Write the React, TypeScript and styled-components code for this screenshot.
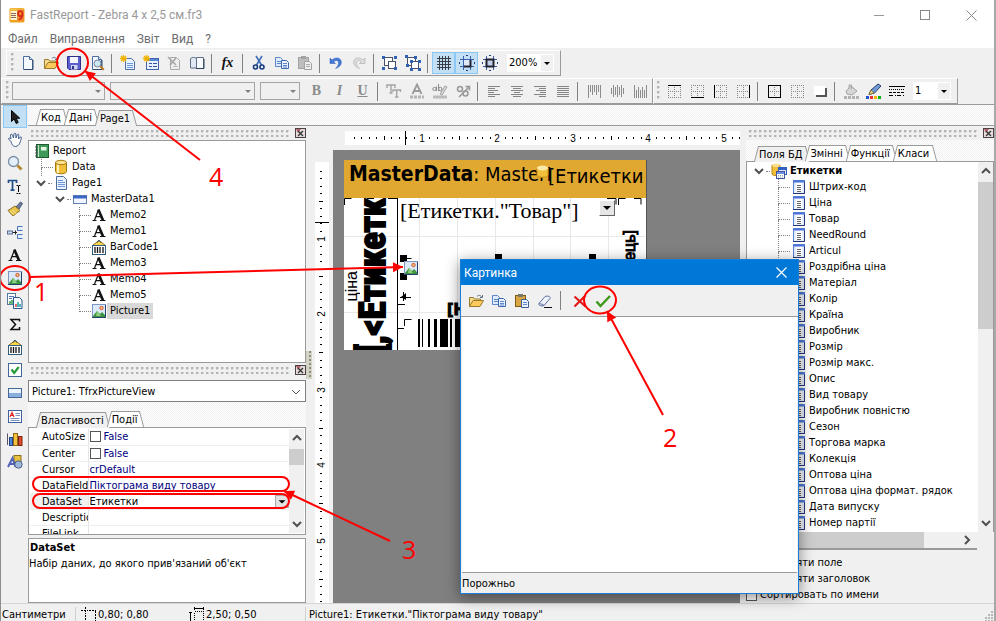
import React from "react";
import styled, { createGlobalStyle, css } from "styled-components";

const UI = `"DejaVu Sans Condensed", "DejaVu Sans", sans-serif`;
const CAPTION = `Roboto, "Open Sans", sans-serif`;
const FACE = "#f0f0f0";
const EDGE = "#9a9a9a";

const Global = createGlobalStyle`
  * { box-sizing: border-box; }
  html, body { margin: 0; padding: 0; }
  body { font-family: ${UI}; font-size: 11px; line-height: 16px; color: #000; background: ${FACE}; }
  button, select, input { font: inherit; color: inherit; margin: 0; padding: 0; }
  svg { display: block; }
`;

const hatch = css`
  background: repeating-conic-gradient(#ffffff 0 25%, #f0f0f0 0 50%) 0 0 / 2px 2px;
`;

/* ---------- icons ---------- */

const Glyph = styled.svg.attrs({ viewBox: "0 0 16 16" })`
  width: 16px;
  height: 16px;
  flex: none;
`;

const dottedBox = (
  <path d="M2 2.5H15M2 8.5H15M2 14.5H15M2.5 2V15M8.5 2V15M14.5 2V15" stroke="#888" strokeDasharray="1 1" fill="none" />
);
const groupShape = (
  <>
    <rect x="2.5" y="2.5" width="8" height="8" fill="#fff" stroke="#4a5068" />
    <rect x="6.5" y="6.5" width="7" height="7" fill="#fff" stroke="#4a5068" />
  </>
);
const guides = (
  <>
    <path d="M1 4.5H15M1 11.5H15M4.5 1V15M11.5 1V15" stroke="#3560b0" />
    <path d="M7 0h2v1H7zM7 15h2v1H7zM0 7h1v2H0zM15 7h1v2h-1z" fill="#1c3c80" />
  </>
);
const pageShape = (
  <>
    <path d="M3.5 1.5h6l3 3v10h-9z" fill="#f4f8ff" stroke="#4d6da0" />
    <path d="M9.5 1.5v3h3" fill="#cfdcf2" stroke="#4d6da0" />
    <path d="M4 14.5h9V5" fill="none" stroke="#34496e" />
  </>
);
const barcodeShape = (
  <>
    <path d="M1.5 6.5L8 1.5l6.5 5z" fill="#ffd84a" stroke="#8a6a10" />
    <path d="M6.5 3.5a1.5 2 0 0 1 3 0" fill="none" stroke="#33506e" />
    <rect x="1.5" y="6.5" width="13" height="9" fill="#fff" stroke="#2f5d80" />
    <path d="M4 8v6M6.5 8v6M9 8v6M12 8v6" stroke="#111" strokeWidth="1.3" />
  </>
);
const pictureShape = (
  <>
    <rect x="1.5" y="1.5" width="13" height="13" fill="#dce9fb" stroke="#7c97c4" />
    <path d="M1 14.5h13.5V2" fill="none" stroke="#25406c" />
    <path d="M2 13l4-5 3 3 2-2 3 3v2H2z" fill="#3c9440" />
    <path d="M6 7.5l4 5.5H5z" fill="#8fce7e" />
    <circle cx="10.5" cy="5" r="1.7" fill="#fbc08a" stroke="#d05a28" />
  </>
);
const lines = (rows: number[][]) => (
  <path d={rows.map(([x, w], i) => `M${x} ${3.5 + i * 2}h${w}`).join("")} stroke="#858585" />
);
const barsUp = (tops: number[][]) => (
  <path d={tops.map(([a, b], i) => `M${2.5 + i * 2} ${a}V${b}`).join("")} stroke="#8c8c8c" />
);

const art: Record<string, React.ReactNode> = {
  app: (
    <>
      <rect x="0.5" y="1" width="15" height="14.5" rx="1.5" fill="#f0a21c" />
      <path d="M1 2.5h14" stroke="#f6c957" strokeWidth="2" />
      <rect x="1.5" y="4" width="6.5" height="9" fill="#fff3cf" />
      <path d="M2 6.5h5M2 8.5h5M2 10.5h5" stroke="#8a6a5a" />
      <rect x="8" y="2.5" width="7" height="11.5" fill="#f08a2c" />
      <path d="M13.5 7.5a2.3 2.5 0 1 1-.2-2.2c.6 3-.3 6-3.3 7.2" fill="none" stroke="#d8281c" strokeWidth="1.7" />
    </>
  ),
  new: pageShape,
  open: (
    <>
      <path d="M1.5 13.5V4.5h4l1 1.5h6v3" fill="#f5dc8a" stroke="#9b7a2b" />
      <path d="M1.5 13.5L5 7.5h10.5l-3.5 6z" fill="#fbc95c" stroke="#9b7a2b" />
      <path d="M9 3.5c2-2 4-1 4.5.5M14.5 2v2.5H12" fill="none" stroke="#5a7284" />
    </>
  ),
  save: (
    <>
      <path d="M1.5 1.5h13v13H3l-1.5-1.5z" fill="#5b5fd0" stroke="#30308c" />
      <rect x="4" y="2" width="8" height="6" fill="#f4f6ff" />
      <rect x="5" y="10" width="6.5" height="4.5" fill="#cfd4ee" />
      <rect x="6" y="11" width="2" height="3" fill="#30308c" />
    </>
  ),
  preview: (
    <>
      {pageShape}
      <circle cx="8.5" cy="8.5" r="3.5" fill="#cfe6f5" stroke="#6f8494" />
      <path d="M11.2 11.2l3.6 3.6" stroke="#c07a20" strokeWidth="2" />
    </>
  ),
  newReport: (
    <>
      <path d="M5.5 3.5h6l3 3v8h-9z" fill="#e8f1ff" stroke="#4d6da0" />
      <path d="M7 8.5h6M7 10.5h6M7 12.5h6" stroke="#6c96dd" />
      <path d="M3.5 0v7M0 3.5h7M1 1l5 5M6 1L1 6" stroke="#f0b400" strokeWidth="1.3" />
    </>
  ),
  newDialog: (
    <>
      <rect x="3.5" y="3.5" width="12" height="11" fill="#e8f1ff" stroke="#3f62a8" />
      <path d="M4 5h11" stroke="#5c88da" strokeWidth="2" />
      <path d="M6 8.5h3M10 8.5h4M6 11.5h3M10 11.5h4" stroke="#33549c" />
      <path d="M3.5 0v7M0 3.5h7M1 1l5 5M6 1L1 6" stroke="#f0b400" strokeWidth="1.3" />
    </>
  ),
  del: (
    <>
      <path d="M4.5 2.5h6l3 3v9h-9z" fill="#eee" stroke="#aaa" />
      <path d="M2 2l8 8M10 3L4 10" stroke="#a5a5a5" strokeWidth="1.5" />
      <path d="M7 11.5h5" stroke="#bbb" />
    </>
  ),
  pageSet: (
    <>
      <path d="M1.5 3.5c2-1.5 4-1.5 6 0v9.5h-6z" fill="#dfe8f4" stroke="#5f6f86" />
      <path d="M7.5 2.5h7v11h-7z" fill="#f7fbff" stroke="#5f6f86" />
      <path d="M7 13.5h8V4" fill="none" stroke="#2d3f58" />
    </>
  ),
  cut: (
    <>
      <path d="M5 1l5.5 9M11 1L5.5 10" stroke="#3f6fb8" strokeWidth="1.6" fill="none" />
      <circle cx="4.5" cy="12" r="2" fill="none" stroke="#173a80" strokeWidth="1.6" />
      <circle cx="11" cy="12" r="2" fill="none" stroke="#173a80" strokeWidth="1.6" />
    </>
  ),
  copy: (
    <>
      <path d="M1.5 2.5h5l2 2v7h-7z" fill="#dfebff" stroke="#5c86c8" />
      <path d="M3 6.5h4M3 8.5h4" stroke="#5c86c8" />
      <path d="M7.5 5.5h5l2 2v6h-7z" fill="#e8f1ff" stroke="#3f68b0" />
      <path d="M9 8.5h4M9 10.5h4M9 12h4" stroke="#5c86c8" />
    </>
  ),
  pasteOff: (
    <>
      <rect x="1.5" y="2.5" width="10" height="11" fill="#bdbdbd" stroke="#a2a2a2" />
      <rect x="4" y="1" width="5" height="3" fill="#a2a2a2" />
      <path d="M7.5 6.5h5l2 2v6h-7z" fill="#eee" stroke="#a2a2a2" />
      <path d="M9 9.5h4M9 11.5h4" stroke="#aaa" />
    </>
  ),
  paste: (
    <>
      <rect x="1.5" y="2.5" width="10" height="11" fill="#d9a441" stroke="#7d5a1c" />
      <rect x="4" y="1" width="5" height="3" fill="#776" />
      <path d="M7.5 6.5h5l2 2v6h-7z" fill="#e8f1ff" stroke="#3f5f90" />
      <path d="M9 9.5h4M9 11.5h4" stroke="#5c86c8" />
    </>
  ),
  undo: <path d="M2 3v5.5h5.5L5.7 6.8C8 4.5 11 5.5 10.5 8.5 10.3 10.5 9 12 7.5 13.5c3.5-1 6-3.5 5.8-6.5C13 2.5 7.5 1.5 3.9 5z" fill="#4377d4" stroke="#2f5fb6" strokeWidth=".5" />,
  redo: <path d="M14 3v5.5H8.5l1.8-1.7C8 4.5 5 5.5 5.5 8.5c.2 2 1.5 3.5 3 5-3.5-1-6-3.5-5.8-6.5C3 2.5 8.5 1.5 12.1 5z" fill="#ddd" stroke="#b9b9b9" strokeWidth=".8" />,
  group: (
    <>
      {groupShape}
      <path d="M0 1h3v3H0zM12 1h3v3h-3zM0 12h3v3H0zM12 12h3v3h-3z" fill="#2f62b4" />
    </>
  ),
  ungroup: (
    <>
      {groupShape}
      <path d="M0 0h3v3H0zM9 1h3v3H9zM1 9h3v3H1zM5 5h3v3H5zM13 5h3v3h-3zM5 13h3v3H5zM13 13h3v3h-3z" fill="#2f62b4" />
    </>
  ),
  grid: <path d="M1 3.5H15M1 6.5H15M1 9.5H15M1 12.5H15M3.5 1V15M6.5 1V15M9.5 1V15M12.5 1V15" stroke="#3a3f46" />,
  snap: (
    <>
      {guides}
      <rect x="5" y="5" width="6" height="6" fill="#dfe8f6" />
      <path d="M5 11.5h6.5V5" stroke="#223" strokeWidth="2" fill="none" />
    </>
  ),
  fit: (
    <>
      {guides}
      <rect x="4.5" y="4.5" width="7" height="7" fill="#c4d2ec" stroke="#223" strokeWidth="2" />
    </>
  ),
  textStyle: (
    <path d="M1 5V2h8v3M5 2v8M3.5 10h3M7 9V7h7.5v2M10.7 7v7M9 14h3.5" stroke="#a4a4a4" strokeWidth="1.4" fill="none" />
  ),
  fontColor: (
    <>
      <path d="M3.5 11L8 1.5 12.5 11M5.5 8h5" stroke="#9b9b9b" strokeWidth="1.8" fill="none" />
      <path d="M1 14h14" stroke="#b4b4b4" strokeWidth="3" strokeDasharray="3 1" />
    </>
  ),
  highlight: (
    <>
      <circle cx="2.5" cy="6" r="1.7" stroke="#8b8b8b" fill="none" />
      <path d="M4.5 3.5v4.500M6.5 1v7" stroke="#8b8b8b" />
      <circle cx="8.3" cy="6" r="1.7" stroke="#8b8b8b" fill="none" />
      <path d="M8 11l5-8 2 1-5 8z" fill="#ddd" stroke="#a0a0a0" />
      <path d="M1 14h14" stroke="#bbb" strokeWidth="3" />
    </>
  ),
  rotate: (
    <>
      <path d="M4 14L13.5 4.5M10.5 3.5h4v4" stroke="#989898" strokeWidth="1.5" fill="none" />
      <circle cx="5" cy="6" r="2.5" stroke="#989898" strokeWidth="1.5" fill="none" />
      <circle cx="10.5" cy="10.5" r="2.5" stroke="#989898" strokeWidth="1.5" fill="none" />
    </>
  ),
  alignL: lines([[2, 12], [2, 7], [2, 10], [2, 6], [2, 12], [2, 7]]),
  alignC: lines([[2, 12], [4, 8], [2, 12], [5, 6], [2, 12], [4, 8]]),
  alignR: lines([[2, 12], [7, 7], [4, 10], [8, 6], [2, 12], [7, 7]]),
  alignJ: lines([[2, 12], [2, 12], [2, 12], [2, 12], [2, 12], [2, 12]]),
  vTop: barsUp([[2, 15], [2, 9], [2, 12], [2, 9], [2, 12], [2, 9], [2, 15]]),
  vMid: barsUp([[5, 11], [2, 14], [4, 12], [2, 14], [4, 12], [2, 14], [5, 11]]),
  vBot: barsUp([[2, 15], [7, 15], [4, 15], [7, 15], [4, 15], [7, 15], [2, 15]]),
  bTop: <>{dottedBox}<path d="M2 2.5h13" stroke="#000" /></>,
  bBottom: <>{dottedBox}<path d="M2 14.5h13" stroke="#000" /></>,
  bLeft: <>{dottedBox}<path d="M2.5 2v13" stroke="#000" /></>,
  bRight: <>{dottedBox}<path d="M14.5 2v13" stroke="#000" /></>,
  bAll: <>{dottedBox}<rect x="2.5" y="2.5" width="12" height="12" fill="none" stroke="#000" /></>,
  bNone: dottedBox,
  shadow: (
    <>
      <path d="M4 5h11v9H4z" fill="#555" />
      <path d="M2 3h11v9H2z" fill="#fff" />
    </>
  ),
  fill: (
    <>
      <path d="M3 8l5-5 6 5-5 4-5-1z" fill="#d6d6d6" stroke="#a5a5a5" />
      <path d="M6 6V2h2.5v4" fill="none" stroke="#a5a5a5" />
      <path d="M1 14.5h15" stroke="#b2b2b2" strokeWidth="3" strokeDasharray="3 1" />
    </>
  ),
  pen: (
    <>
      <path d="M3 11.5L5 7l7-6 3 2-6.5 7z" fill="#6c9ad8" stroke="#2c3f66" />
      <path d="M3 11.5L5 7l3 3z" fill="#f3d470" stroke="#6b5c26" strokeWidth=".6" />
      <path d="M0 14.5h3" stroke="#2050d0" strokeWidth="3" />
      <path d="M4 14.5h3" stroke="#f03030" strokeWidth="3" />
      <path d="M8 14.5h3" stroke="#f5b400" strokeWidth="3" />
      <path d="M12 14.5h3" stroke="#10b010" strokeWidth="3" />
    </>
  ),
  lineStyle: (
    <>
      <path d="M0 3.5h16" stroke="#000" />
      <path d="M0 6.5h16" stroke="#000" strokeDasharray="1 1" />
      <path d="M0 9.5h16" stroke="#000" strokeDasharray="3 1" />
      <path d="M0 12.5h16" stroke="#000" strokeDasharray="4 2 1 1" />
    </>
  ),
  pointer: <path d="M4.5 1.5v11l2.7-2.5 2 4.5 2-1-2-4.3h3.5z" fill="#222" stroke="#000" />,
  hand: (
    <path d="M4 9.5L1.5 7c0-1.3 1.4-1.2 2.5 0L3.5 3c.3-1.2 1.5-1 2 0L6.5 6 7 1.8c.5-1 1.6-.8 1.8.2L9 6l1.3-3.5c.7-.8 1.6-.3 1.5.6L11.5 7l1.7-2c.9-.5 1.5.3 1.2 1-1 3-1.4 8-6 8.5-2.7 0-3.8-2.5-4.4-5z" fill="#fff" stroke="#3f5d8a" />
  ),
  zoom: (
    <>
      <circle cx="6.5" cy="6.5" r="5" fill="#e3effb" stroke="#7e8fa5" strokeWidth="1.3" />
      <path d="M10.5 10.5l4 4" stroke="#b58a35" strokeWidth="3" />
    </>
  ),
  text: (
    <>
      <path d="M1.5 5V2.5h8V5M5.5 2.5V12M3.5 12.2h4" stroke="#1f4f8a" strokeWidth="1.7" fill="none" />
      <path d="M9.5 7.5h1.500l.5.5.5-.5h1.5M11.500 8v6M9.5 15.5h1.5l.5-.5.5.5h1.5" stroke="#000" fill="none" />
    </>
  ),
  brush: (
    <>
      <path d="M9 6l4.5-5 2 1.5L12 8z" fill="#6b7f9e" stroke="#44536b" />
      <path d="M1 9.5L8 5l5 4.5-7 5.5z" fill="#e8c34b" stroke="#8c6f22" />
      <path d="M3 10l4 4M5.5 9l4 4" stroke="#fbe79b" />
    </>
  ),
  connect: (
    <>
      <rect x="0.5" y="7" width="5" height="3" fill="#c9d9f4" stroke="#5a6c8c" />
      <path d="M6 8.5h4M8.5 6.5v4" stroke="#222" />
      <path d="M15.5 2.5h-5v4h5M15.5 10.5h-5v4h5" fill="#e4eefc" stroke="#4d71b5" />
    </>
  ),
  letter: (
    <>
      <path d="M3.5 13L7.5 3" stroke="#111" strokeWidth="1.2" />
      <path d="M7.3 2.5L12 13.3" stroke="#111" strokeWidth="2.6" />
      <path d="M5 9.7h5.5M1.5 13.5h4M9 13.5h5.5" stroke="#111" strokeWidth="1.2" />
    </>
  ),
  picture: pictureShape,
  subreport: (
    <>
      <rect x="0.5" y="0.5" width="8" height="11" fill="#fff" stroke="#55779c" />
      <path d="M6.5 4.5h6l2.5 2.5v8.5H6.5z" fill="#f4f9ff" stroke="#2d5790" />
      <path d="M2 3.5h5M2 5.5h3" stroke="#4f79b8" />
      <path d="M3 11V8M5 11V7" stroke="#2c9b46" strokeWidth="1.5" />
      <path d="M9 14v-3" stroke="#d43b3b" strokeWidth="1.5" />
      <path d="M11 14V9M13 14v-3" stroke="#23a0a0" strokeWidth="1.5" />
    </>
  ),
  sum: <path d="M12.5 5.5V3.5H4L8.5 8.5 4 13.5h8.5v-2.5" fill="none" stroke="#111" strokeWidth="1.5" />,
  barcode: barcodeShape,
  check: (
    <>
      <rect x="1.5" y="1.5" width="13" height="13" fill="#fff" stroke="#44679a" />
      <path d="M4.5 7.5l2.7 3.5 4.5-6" fill="none" stroke="#239b37" strokeWidth="2.2" />
    </>
  ),
  band: (
    <>
      <rect x="1.5" y="3.5" width="13" height="9" fill="#eef4fd" stroke="#44679a" />
      <path d="M2 8h12v4H2z" fill="#8caedf" />
    </>
  ),
  richText: (
    <>
      <rect x="1.5" y="2.5" width="13" height="12" fill="#fff" stroke="#3f5fa0" />
      <path d="M3 9l2-4.5L7 9M4 7.5h2" stroke="#e02020" fill="none" strokeWidth="1.2" />
      <path d="M8.5 5.5h4.5M8.5 7.5h4.5M3.5 10.5h9M3.5 12.5h9" stroke="#7f93c0" />
    </>
  ),
  chart: (
    <>
      <path d="M0.5 14V2.5" stroke="#556" />
      <rect x="2.5" y="6.5" width="3" height="8" fill="#4d83d8" stroke="#264a88" />
      <rect x="6.5" y="2.5" width="4" height="12" fill="#f3c13c" stroke="#8d6914" />
      <rect x="11.5" y="5.5" width="3.5" height="9" fill="#d84c2c" stroke="#7f2412" />
    </>
  ),
  shapes: (
    <>
      <rect x="7" y="1.5" width="7" height="7" fill="#e9c23f" stroke="#8c6f22" />
      <path d="M1 13l4.5-9 3 9M3 10h5" stroke="#5361b8" strokeWidth="2" fill="none" />
      <circle cx="11.5" cy="10.5" r="3.7" fill="#9eb6d8" stroke="#4c648c" />
    </>
  ),
  report: (
    <>
      <rect x="2.5" y="1.5" width="12" height="13" fill="#3f9a5a" stroke="#1e5a32" />
      <path d="M4.5 2v12" stroke="#c9e6cf" />
      <rect x="7" y="4" width="5.5" height="3.5" fill="#e6f5e8" />
      <path d="M1 4h3M1 7h3M1 10h3M1 13h3" stroke="#555" />
    </>
  ),
  data: (
    <>
      <path d="M2.5 3.5v9c0 3 11 3 11 0v-9z" fill="#f2bf3a" stroke="#a67a12" />
      <path d="M5 5v9" stroke="#fff0b8" strokeWidth="2" />
      <ellipse cx="8" cy="3.5" rx="5.5" ry="2.2" fill="#fbe08d" stroke="#a67a12" />
    </>
  ),
  page: (
    <>
      <path d="M3.5 1.5h7l3 3v10h-10z" fill="#eaf2ff" stroke="#4d6da0" />
      <path d="M5 5.5h5M5 7.5h7M5 9.5h7M5 11.5h7" stroke="#6f97da" />
    </>
  ),
  masterBand: (
    <>
      <rect x="1.5" y="4.5" width="13" height="8" fill="#f2f7ff" stroke="#6281b8" />
      <path d="M1 6h14" stroke="#3c68c4" strokeWidth="3" />
    </>
  ),
  dataset: (
    <>
      <path d="M1 2v9c0 2 8 2 8 0V2z" fill="#f2bf3a" stroke="#b8860b" />
      <ellipse cx="5" cy="2.3" rx="4" ry="1.8" fill="#fbe08d" />
      <rect x="7.5" y="4.5" width="8" height="7" fill="#dfe9fb" stroke="#2f5fc0" />
      <path d="M8 6h7" stroke="#2f5fc0" strokeWidth="2" />
      <rect x="5.5" y="8.5" width="8" height="7" fill="#fff" stroke="#3f55a0" />
      <path d="M6 10h7" stroke="#6f8fe0" strokeWidth="2" />
      <path d="M7 12.5h5M7 14h5" stroke="#8aa" strokeDasharray="1 1" />
    </>
  ),
  field: (
    <>
      <rect x="3.5" y="1.5" width="11" height="13" fill="#e6eefb" stroke="#5a7fd0" />
      <path d="M3 14.5h11.5V2" fill="none" stroke="#26357a" />
      <path d="M3 2.5h12" stroke="#4a76d8" strokeWidth="2" />
      <rect x="6" y="4" width="6" height="9" fill="#fff" />
      <path d="M7 6.5h4M7 8.5h4M7 10.5h4M7 12.5h4" stroke="#666" />
    </>
  ),
  eraser: (
    <>
      <path d="M2 10.5l6-7c3-1 6 0 5 2l-6 7c-2 1-6 0-5-2z" fill="#eef3fb" stroke="#5a6f9c" />
      <path d="M2 10.5c2 1 4 0 5 2" fill="none" stroke="#5a6f9c" />
      <path d="M7 14.5h8" stroke="#111" />
    </>
  ),
  cross: <path d="M2.5 3.5l11 10M13.5 2.5l-11 11" stroke="#e01b1b" strokeWidth="2.2" />,
  tick: <path d="M1.5 8.5l4 4.5L15 3" stroke="#3f9a1c" strokeWidth="2.5" fill="none" />,
  position: <path d="M0 3.5h7M4.5 0v7M8 3.5h7M14.5 4v11M4.5 8v7M5 14.5h10" stroke="#000" fill="none" strokeDasharray="2 1" />,
  size: (
    <>
      <path d="M6 4.5h9M14.5 6v9M5.5 6v9M6 14.5h8" stroke="#000" strokeDasharray="1 1" />
      <path d="M5 1.5h10M5.5 0v3M14.5 0v3M1.5 5v10M0 5.5h3M0 14.5h3" stroke="#000" />
    </>
  ),
};

const Icon = ({ name }: { name: string }) => <Glyph aria-hidden="true">{art[name]}</Glyph>;

const ChevronSvg = styled.svg<{ $turn?: number }>`
  width: 10px;
  height: 10px;
  flex: none;
  transform: rotate(${(p) => p.$turn ?? 0}deg);
`;

const Chevron = ({ turn, thin }: { turn?: number; thin?: boolean }) => (
  <ChevronSvg viewBox="0 0 10 10" $turn={turn}>
    <path d="M1 3l4 4 4-4" fill="none" stroke="#505050" strokeWidth={thin ? 1 : 2} />
  </ChevronSvg>
);

/* ---------- window frame ---------- */

const Window = styled.div`
  position: relative;
  display: flex;
  flex-direction: column;
  width: 100%;
  height: 100vh;
  background: ${FACE};
  border-left: 1px solid #8e8e8e;
  border-right: 2px solid #a8a8a8;
  overflow: hidden;
`;

const TitleBar = styled.header`
  display: flex;
  align-items: center;
  gap: 5px;
  flex: none;
  height: 30px;
  padding-left: 8px;
  background: #fff;
  color: #999;
  font: 12px/16px ${CAPTION};
`;

const Title = styled.h1`
  flex: 1;
  margin: 0;
  font: inherit;
`;

const CaptionButtons = styled.div`
  display: flex;
`;

const CaptionButton = styled.button`
  display: grid;
  place-items: center;
  width: 46px;
  height: 28px;
  border: 0;
  background: none;
`;

const MenuBar = styled.nav`
  display: flex;
  flex: none;
  height: 18px;
  padding-left: 1px;
  background: #fff;
`;

const MenuItem = styled.button`
  padding: 0 6px;
  border: 0;
  background: none;
  color: #6d6d6d;
  font: 12px/18px ${CAPTION};
`;

const ToolRow = styled.div`
  display: flex;
  flex: none;
  height: 28px;
  padding-top: 2px;
`;

const ToolBar = styled.div`
  display: flex;
  align-items: center;
  height: 26px;
  padding: 0 1px 0 4px;
  border: 1px solid #fff;
  border-right-color: ${EDGE};
  border-bottom-color: ${EDGE};
`;

const FirstBar = styled(ToolBar)`
  margin-left: 5px;
`;

const BorderBar = styled(ToolBar)`
  padding-left: 3px;
`;

const dots = css`
  background: radial-gradient(circle at 1px 1px, #b4b4b4 1px, transparent 2px) 0 0 / 5px 5px;
`;

const BarGrip = styled.span`
  width: 5px;
  height: 20px;
  ${dots}
`;

const ToolButton = styled.button<{ $on?: boolean }>`
  display: grid;
  place-items: center;
  width: 23px;
  height: 22px;
  border: 1px solid ${(p) => (p.$on ? "#8cc8f5" : "transparent")};
  background: ${(p) => (p.$on ? "#c3dff3" : "none")};
`;

const Separator = styled.span`
  width: 1px;
  height: 19px;
  margin: 0 4px 0 3px;
  background: #808080;
`;

const LetterIcon = styled.span<{ $kind: string }>`
  font: bold 14px/16px "Liberation Serif", serif;
  color: ${(p) => (p.$kind === "fx" ? "#111" : "#8b8b8b")};
  font-style: ${(p) => (p.$kind === "I" || p.$kind === "fx" ? "italic" : "normal")};
  text-decoration: ${(p) => (p.$kind === "U" ? "underline" : "none")};
`;

const ComboBox = styled.span<{ $w: number; $off?: boolean; $lead?: number }>`
  display: grid;
  align-items: center;
  width: ${(p) => p.$w}px;
  height: 18px;
  margin: 0 5px 0 ${(p) => p.$lead ?? 0}px;
  border: 1px solid ${(p) => (p.$off ? "#a5a5a5" : "#fff")};
  background: ${(p) => (p.$off ? FACE : "#fff")};
  > * { grid-area: 1 / 1; }
  > svg { justify-self: end; width: 12px; height: 16px; pointer-events: none; background: ${FACE}; }
`;

const PlainSelect = styled.select`
  width: 100%;
  height: 16px;
  padding-left: 1px;
  border: 0;
  outline: 0;
  background: none;
  appearance: none;
`;

const Combo = ({ w, value, label, lead }: { w: number; value?: string; label: string; lead?: number }) => (
  <ComboBox $w={w} $off={!value} $lead={lead}>
    <PlainSelect aria-label={label} disabled={!value}>
      <option>{value ?? ""}</option>
    </PlainSelect>
    <svg viewBox="0 0 12 16"><path d="M3 7h6l-3 3z" fill={value ? "#000" : "#808080"} /></svg>
  </ComboBox>
);

const letters = ["fx", "B", "I", "U"];
const pressed = ["grid", "snap", "pointer"];

const Tools = ({ names }: { names: string[] }) => (
  <>
    {names.map((n, i) =>
      n === "|" ? (
        <Separator key={i} />
      ) : (
        <ToolButton key={i} aria-label={n} $on={pressed.includes(n)}>
          {letters.includes(n) ? <LetterIcon $kind={n}>{n}</LetterIcon> : <Icon name={n} />}
        </ToolButton>
      ),
    )}
  </>
);

/* ---------- docked panels ---------- */

const Body = styled.div`
  display: flex;
  flex: 1;
  min-height: 0;
  border-top: 1px solid ${EDGE};
`;

const ToolBox = styled.aside`
  display: flex;
  flex-direction: column;
  flex: none;
  width: 27px;
  padding-left: 2px;
  > button { height: 23px; width: 24px; }
`;

const Content = styled.div`
  display: flex;
  flex-direction: column;
  flex: 1;
  min-width: 0;
  min-height: 0;
`;

const Tabs = styled.div<{ $h: number }>`
  display: flex;
  align-items: flex-end;
  flex: none;
  height: ${(p) => p.$h}px;
  padding-left: 10px;
  border-bottom: 1px solid ${EDGE};
  ${hatch}
`;

const Tab = styled.button<{ $on?: boolean }>`
  position: relative;
  z-index: 0;
  height: 16px;
  margin-bottom: ${(p) => (p.$on ? -1 : 0)}px;
  padding: 1px 5px 0 3px;
  border: 0;
  background: none;
  line-height: 15px;
  white-space: nowrap;
  &::before, &::after {
    content: "";
    position: absolute;
    z-index: -1;
    inset: 0 40% 0 0;
    border: solid ${EDGE};
    border-width: 1px 0 0 1px;
    background: ${(p) => (p.$on ? FACE : "#fff")};
    transform: skewX(-15deg);
  }
  &::after {
    inset: 0 0 0 40%;
    border-width: 1px 1px 0 0;
    transform: skewX(15deg);
  }
`;

const Panels = styled.div`
  display: flex;
  flex: 1;
  min-height: 0;
`;

const LeftDock = styled.section`
  display: flex;
  flex-direction: column;
  flex: none;
  width: 278px;
`;

const GripBar = styled.div`
  display: flex;
  align-items: center;
  gap: 4px;
  flex: none;
  height: 14px;
  padding-left: 3px;
  &::before {
    content: "";
    flex: 1;
    height: 7px;
    ${dots}
  }
`;

const DockClose = styled.button`
  display: grid;
  place-items: center;
  width: 11px;
  height: 10px;
  border: 1px solid #4b4048;
  background: #e6dcdc;
`;

const Dock = () => (
  <GripBar>
    <DockClose aria-label="Закрити">
      <svg width="9" height="8" viewBox="0 0 9 8"><path d="M0 0h5L2 4z" fill="#b5626a" /><path d="M2 2l5 5M7 2L2 7" stroke="#333" strokeWidth="1.3" /></svg>
    </DockClose>
  </GripBar>
);

const Sunken = styled.div`
  border: 1px solid ${EDGE};
  background: #fff;
`;

const Tree = styled(Sunken)`
  flex: 1;
  min-height: 0;
  padding: 2px 0 0 5px;
  overflow: hidden;
`;

const Node = styled.div`
  display: flex;
  align-items: center;
  height: 16px;
  white-space: nowrap;
`;

const Caption = styled.span<{ $picked?: boolean; $bold?: boolean }>`
  padding: 0 3px;
  background: ${(p) => (p.$picked ? "#d9d9d9" : "none")};
  font-weight: ${(p) => (p.$bold ? "bold" : "normal")};
`;

const Branch = styled.span<{ $line?: boolean; $last?: boolean }>`
  flex: none;
  width: 19px;
  height: 16px;
  padding-left: 7px;
  &::before {
    content: "";
    display: block;
    width: 11px;
    height: 8px;
    border-left: 1px dotted ${(p) => (p.$line ? "#808080" : "transparent")};
    border-bottom: 1px dotted ${(p) => (p.$line ? "#808080" : "transparent")};
  }
  &::after {
    content: "";
    display: block;
    height: 8px;
    border-left: 1px dotted ${(p) => (p.$line && !p.$last ? "#808080" : "transparent")};
  }
`;

const Toggle = styled.button`
  display: flex;
  align-items: center;
  flex: none;
  width: 19px;
  padding-left: 2px;
  border: 0;
  background: none;
  &::after { content: ""; width: 4px; margin-left: 2px; border-top: 1px dotted #808080; }
`;

interface NodeData { depth: number; icon: string; text: string; open?: boolean; last?: boolean; picked?: boolean }

const reportTree: NodeData[] = [
  { depth: 0, icon: "report", text: "Report" },
  { depth: 1, icon: "data", text: "Data" },
  { depth: 1, icon: "page", text: "Page1", open: true },
  { depth: 2, icon: "masterBand", text: "MasterData1", open: true },
  { depth: 3, icon: "letter", text: "Memo2" },
  { depth: 3, icon: "letter", text: "Memo1" },
  { depth: 3, icon: "barcode", text: "BarCode1" },
  { depth: 3, icon: "letter", text: "Memo3" },
  { depth: 3, icon: "letter", text: "Memo4" },
  { depth: 3, icon: "letter", text: "Memo5" },
  { depth: 3, icon: "picture", text: "Picture1", last: true, picked: true },
];

const TreeNode = ({ node }: { node: NodeData }) => (
  <Node>
    {Array.from({ length: node.depth }, (_, i) =>
      i === node.depth - 1 && node.open ? (
        <Toggle key={i} aria-label={node.text}><Chevron /></Toggle>
      ) : (
        <Branch key={i} $line={i === node.depth - 1} $last={node.last} />
      ),
    )}
    <Icon name={node.icon} />
    <Caption $picked={node.picked}>{node.text}</Caption>
  </Node>
);

const ObjectSelect = styled.div`
  display: grid;
  align-items: center;
  flex: none;
  height: 22px;
  margin-top: 3px;
  padding: 1px 4px 0 2px;
  border: 1px solid #7f7f7f;
  background: #fff;
  > * { grid-area: 1 / 1; }
  > svg { justify-self: end; pointer-events: none; }
`;

const PropertyBox = styled(Sunken)`
  display: flex;
  flex: none;
  height: 107px;
  padding: 1px;
  border-top: 0;
  overflow: hidden;
`;

const PropertyTable = styled.table`
  flex: 1;
  table-layout: fixed;
  width: 100%;
  height: 112px;
  border-collapse: collapse;
`;

const Name = styled.th<{ $picked?: boolean }>`
  width: 58px;
  height: 16px;
  padding: 0 0 0 12px;
  border-right: 1px solid #e6e6e6;
  border-bottom: 1px solid #efefef;
  background: ${(p) => (p.$picked ? "#f0f0f0" : "#fff")};
  font-weight: normal;
  line-height: 15px;
  text-align: left;
  white-space: nowrap;
  overflow: hidden;
`;

const Value = styled.td`
  height: 16px;
  padding: 0 0 0 1px;
  border-bottom: 1px solid #efefef;
  color: #000080;
  line-height: 15px;
`;

const CheckLabel = styled.label<{ $tall?: boolean }>`
  display: flex;
  align-items: center;
  gap: 3px;
  height: ${(p) => (p.$tall ? 16 : 15)}px;
`;

const Box = styled.input.attrs({ type: "checkbox" })`
  appearance: none;
  flex: none;
  width: 11px;
  height: 11px;
  border: 1px solid #555;
  background: #fff;
`;

const CellSelect = styled.span`
  display: grid;
  align-items: center;
  height: 15px;
  color: #000;
  > * { grid-area: 1 / 1; }
  > select { height: 15px; padding: 0; }
  > svg { justify-self: end; width: 14px; height: 13px; background: #e1e1e1; border: 1px solid #aaa; pointer-events: none; }
`;

const ScrollColumn = styled.div`
  display: flex;
  flex-direction: column;
  align-items: center;
  justify-content: space-between;
  flex: none;
  width: 15px;
  padding: 4px 0;
  background: ${FACE};
`;

const Thumb = styled.span<{ $grow: number; $rest: number }>`
  display: flex;
  flex-direction: column;
  flex: 1;
  width: 15px;
  margin: 6px 0;
  &::before { content: ""; flex: ${(p) => p.$grow}; background: #cdcdcd; }
  &::after { content: ""; flex: ${(p) => p.$rest}; }
`;

const Hint = styled(Sunken)`
  flex: none;
  height: 65px;
  margin-top: 3px;
  padding-top: 1px;
  h2 { margin: 0; padding-left: 1px; font: bold 11px/16px ${UI}; }
  p { margin: 0; }
`;

const Splitter = styled.div`
  flex: none;
  align-self: flex-start;
  width: 6px;
  height: 28px;
  margin: 225px 3px 0 0;
  border-left: 1px solid #cfcfbd;
  background: radial-gradient(circle at 1px 1px, #8c8c80 1px, transparent 1px) 2px 0 / 4px 4px #d5d5c5;
`;

/* ---------- designer surface ---------- */

const Designer = styled.section`
  display: grid;
  grid-template-columns: 14px minmax(0, 1fr);
  grid-template-rows: 14px minmax(0, 1fr);
  flex: 1;
  gap: 5px 4px;
  min-width: 0;
  padding-top: 5px;
  overflow: hidden;
`;

const HRuler = styled.div`
  grid-column: 2;
  margin-left: 12px;
  background: #fff;
  overflow: hidden;
`;

const VRuler = styled.div`
  margin-top: 12px;
  background: #fff;
  overflow: hidden;
  min-height: 0;
`;

const RulerText = styled.text`
  font: 10px "Liberation Sans", sans-serif;
  text-anchor: middle;
`;

const UNIT = 75.6;
const steps = Array.from({ length: 60 }, (_, i) => i + 1).filter((i) => i % 10 !== 0);

const Ruler = ({ vertical }: { vertical?: boolean }) => (
  <svg width={vertical ? 14 : 500} height={vertical ? 500 : 14} shapeRendering="crispEdges">
    {steps.map((i) => {
      const at = Math.round((i * UNIT) / 10) + 1;
      const r = i % 5 === 0 ? 2 : 1;
      return vertical ? (
        <rect key={i} x={6 - r} y={at} width={r * 2} height="1" />
      ) : (
        <rect key={i} x={at} y={7 - r} width="1" height={r * 2} />
      );
    })}
    {[1, 2, 3, 4, 5].map((n) => {
      const at = Math.round(n * UNIT) + 1;
      return vertical ? (
        <RulerText key={n} x={-at} y="10" transform="rotate(-90)">{n}</RulerText>
      ) : (
        <RulerText key={n} x={at} y="11">{n}</RulerText>
      );
    })}
    {vertical ? <rect x="0" y="60" width="14" height="1" /> : <rect x="60" y="0" width="1" height="14" />}
  </svg>
);

const Canvas = styled.div`
  padding: 10px 11px;
  background: #808080;
  overflow: hidden;
`;

const Paper = styled.div`
  position: relative;
  width: 303px;
  height: 190px;
  background: #fff;
  overflow: hidden;
`;

const BandHeader = styled.div`
  height: 38px;
  padding: 1px 0 0 5px;
  background: #e0a830;
  font: 20px/27px ${UI};
  white-space: pre;
  > b { font-size: 21px; }
`;

const Placed = styled.div<{ $x: number; $y: number }>`
  position: absolute;
  left: ${(p) => p.$x}px;
  top: ${(p) => p.$y}px;
  white-space: nowrap;
`;

const BandField = styled(Placed)`
  font: 20px/27px ${UI};
`;

const Serif = styled(Placed)`
  font: 22px/26px "Liberation Serif", serif;
`;

const upright = css`
  writing-mode: vertical-rl;
  transform: rotate(180deg);
`;

const PriceText = styled(Placed)`
  ${upright}
  font: 16px/16px "Liberation Sans", sans-serif;
`;

const UnitText = styled(Placed)`
  ${upright}
  font: 16px/18px "Liberation Sans", sans-serif;
  -webkit-text-stroke: 1px #000;
`;

const HeavyClip = styled(Placed)`
  width: 46px;
  height: 152px;
  overflow: hidden;
`;

const Heavy = styled.div`
  ${upright}
  position: absolute;
  bottom: -4px;
  left: -1px;
  font: bold 36px/46px Impact, "Liberation Sans Narrow", "Roboto Condensed", "DejaVu Sans Condensed", sans-serif;
  -webkit-text-stroke: 2px #000;
`;

const SmallHeavy = styled(Placed)`
  font: bold 16px/18px Impact, "Liberation Sans Narrow", "DejaVu Sans Condensed", sans-serif;
  -webkit-text-stroke: 1px #000;
`;

const DropMark = styled.button`
  position: absolute;
  left: 255px;
  top: 40px;
  display: grid;
  place-items: center;
  width: 16px;
  height: 16px;
  border: 1px solid #fff;
  border-right-color: #666;
  border-bottom-color: #666;
  background: #e6e6e6;
`;

const Lay = styled.svg`
  position: absolute;
  inset: 0;
`;

const bars = [[74, 2], [78, 1], [84, 2], [90, 3], [96, 8], [106, 2], [111, 5]];

/* ---------- right dock ---------- */

const RightDock = styled.aside`
  display: flex;
  flex-direction: column;
  flex: none;
  width: 254px;
  padding-left: 6px;
`;

const FieldBox = styled(Sunken)`
  display: flex;
  flex: 1;
  min-height: 0;
  border-top: 0;
  border-bottom: 0;
`;

const FieldTree = styled.div`
  flex: 1;
  min-width: 0;
  padding: 1px 0 0 5px;
  overflow: hidden;
`;

const HScroll = styled.div`
  display: flex;
  align-items: center;
  justify-content: flex-end;
  flex: none;
  height: 18px;
  margin-right: 17px;
  padding-right: 5px;
  border-bottom: 2px solid ${EDGE};
  background: linear-gradient(90deg, #cdcdcd 77%, ${FACE} 77%);
`;

const Options = styled.div`
  flex: none;
  padding: 5px 0 0;
`;

const fields = [
  "Штрих-код", "Ціна", "Товар", "NeedRound", "Articul", "Роздрібна ціна", "Матеріал", "Колір", "Країна",
  "Виробник", "Розмір", "Розмір макс.", "Опис", "Вид товару", "Виробник повністю", "Сезон", "Торгова марка",
  "Колекція", "Оптова ціна", "Оптова ціна формат. рядок", "Дата випуску", "Номер партії",
];

/* ---------- dialog, status bar, marks ---------- */

const Dialog = styled.section`
  position: absolute;
  left: 459px;
  top: 259px;
  display: flex;
  flex-direction: column;
  width: 339px;
  height: 335px;
  border: 1px solid #1a7fd4;
  background: ${FACE};
  box-shadow: 0 3px 14px rgba(0, 0, 0, 0.45);
`;

const DialogTitle = styled.div`
  display: flex;
  align-items: center;
  justify-content: space-between;
  height: 25px;
  padding-left: 3px;
  background: #0078d7;
  color: #fff;
  font: 12px/16px ${CAPTION};
`;

const CloseButton = styled.button`
  width: 31px;
  height: 24px;
  padding-left: 9px;
  border: 0;
  background: none;
`;

const DialogTools = styled.div`
  display: flex;
  align-items: center;
  height: 32px;
  padding-left: 3px;
  border-bottom: 1px solid ${EDGE};
`;

const DialogGap = styled(Separator)`
  margin: 0 7px 0 4px;
`;

const DialogView = styled.div`
  flex: 1;
  margin: 0 1px;
  border-bottom: 1px solid ${EDGE};
  background: #fff;
`;

const DialogStatus = styled.div`
  height: 20px;
  padding: 3px 1px 0;
`;

const StatusBar = styled.footer`
  display: flex;
  align-items: center;
  flex: none;
  height: 18px;
  border-top: 1px solid #d5d5d5;
  padding-top: 4px;
  white-space: nowrap;
`;

const Cell = styled.span<{ $w?: number }>`
  display: flex;
  align-items: center;
  gap: 1px;
  width: ${(p) => (p.$w ? `${p.$w}px` : "auto")};
  flex: ${(p) => (p.$w ? "none" : "1")};
  padding-left: 1px;
`;

const SplitCell = styled(Cell)`
  padding-left: 5px;
  border-left: 1px solid #d0d0d0;
`;

const TextCell = styled(Cell)`
  padding-left: 3px;
  border-left: 1px solid #d0d0d0;
`;

const Marks = styled.svg`
  position: absolute;
  left: -1px;
  top: 0;
  pointer-events: none;
  fill: none;
  stroke: #ff0000;
  stroke-width: 2;
`;

const MarkText = styled.text`
  font: 25px "Open Sans", "Noto Sans", sans-serif;
  fill: #ff0000;
  stroke: none;
`;

const arrows = [
  { from: [200, 160], to: [85, 71], turn: 217.7 },
  { from: [30, 277], to: [403, 267], turn: -1.5 },
  { from: [663, 415], to: [607, 311], turn: 241.7 },
  { from: [390, 541], to: [284, 491], turn: 205.3 },
];

const Row = ({ name, value, check }: { name: string; value?: string; check?: boolean }) => (
  <tr>
    <Name scope="row" $picked={name === "DataSet"}>{name}</Name>
    <Value>
      {check ? (
        <CheckLabel><Box />{value}</CheckLabel>
      ) : name === "DataSet" ? (
        <CellSelect>
          <PlainSelect aria-label="DataSet"><option>{value}</option></PlainSelect>
          <svg viewBox="0 0 14 13"><path d="M3 5h8l-4 4z" /></svg>
        </CellSelect>
      ) : value}
    </Value>
  </tr>
);

export default function App() {
  return (
    <Window>
      <Global />
      <TitleBar>
        <Icon name="app" />
        <Title>FastReport - Zebra 4 x 2,5 см.fr3</Title>
        <CaptionButtons>
          <CaptionButton aria-label="Згорнути"><svg width="11" height="11"><path d="M0 5.5h10" stroke="#999" /></svg></CaptionButton>
          <CaptionButton aria-label="Розгорнути"><svg width="11" height="11"><rect x=".5" y=".5" width="9" height="9" fill="none" stroke="#888" /></svg></CaptionButton>
          <CaptionButton aria-label="Закрити"><svg width="11" height="11"><path d="M.5.5l10 10M10.5.5l-10 10" stroke="#888" /></svg></CaptionButton>
        </CaptionButtons>
      </TitleBar>
      <MenuBar>
        {["Файл", "Виправлення", "Звіт", "Вид", "?"].map((m) => <MenuItem key={m}>{m}</MenuItem>)}
      </MenuBar>
      <ToolRow>
        <FirstBar>
          <BarGrip />
          <Tools names={["new", "open", "save", "preview", "|", "newReport", "newDialog", "del", "pageSet", "|", "fx", "|", "cut", "copy", "pasteOff", "|", "undo", "redo", "|", "group", "ungroup", "|", "grid", "snap", "fit"]} />
          <Combo w={47} value="200%" label="Масштаб" lead={6} />
        </FirstBar>
      </ToolRow>
      <ToolRow>
        <ToolBar>
          <BarGrip />
          <Combo w={93} label="Стиль" lead={1} />
          <Combo w={145} label="Шрифт" />
          <Combo w={40} label="Розмір" />
          <Tools names={["B", "I", "U", "|", "textStyle", "fontColor", "highlight", "rotate", "|", "alignL", "alignC", "alignR", "alignJ", "|", "vTop", "vMid", "vBot"]} />
        </ToolBar>
        <BorderBar>
          <BarGrip />
          <Tools names={["bTop", "bBottom", "bLeft", "bRight", "|", "bAll", "bNone", "shadow", "|", "fill", "pen", "lineStyle"]} />
          <Combo w={38} value="1" label="Товщина" lead={5} />
        </BorderBar>
      </ToolRow>
      <Body>
        <ToolBox>
          <Tools names={["pointer", "hand", "zoom", "text", "brush", "connect", "letter", "picture", "subreport", "sum", "barcode", "check", "band", "richText", "chart", "shapes"]} />
        </ToolBox>
        <Content>
          <Tabs $h={21} role="tablist">
            <Tab role="tab">Код</Tab><Tab role="tab">Дані</Tab><Tab role="tab" $on>Page1</Tab>
          </Tabs>
          <Panels>
            <LeftDock>
              <Dock />
              <Tree>{reportTree.map((n) => <TreeNode key={n.text} node={n} />)}</Tree>
              <Dock />
              <ObjectSelect>
                <PlainSelect aria-label="Об'єкт"><option>Picture1: TfrxPictureView</option></PlainSelect>
                <Chevron thin />
              </ObjectSelect>
              <Tabs $h={26} role="tablist">
                <Tab role="tab" $on>Властивості</Tab><Tab role="tab">Події</Tab>
              </Tabs>
              <PropertyBox>
                <PropertyTable>
                  <tbody>
                    <Row name="AutoSize" value="False" check />
                    <Row name="Center" value="False" check />
                    <Row name="Cursor" value="crDefault" />
                    <Row name="DataField" value="Піктограма виду товару" />
                    <Row name="DataSet" value="Етикетки" />
                    <Row name="Description" />
                    <Row name="FileLink" />
                  </tbody>
                </PropertyTable>
                <ScrollColumn><Chevron turn={180} /><Thumb $grow={1} $rest={3} /><Chevron /></ScrollColumn>
              </PropertyBox>
              <Hint>
                <h2>DataSet</h2>
                <p>Набір даних, до якого прив'язаний об'єкт</p>
              </Hint>
            </LeftDock>
            <Splitter />
            <Designer>
              <HRuler><Ruler /></HRuler>
              <VRuler><Ruler vertical /></VRuler>
              <Canvas>
                <Paper>
                  <BandHeader><b>MasterData</b>: MasterI</BandHeader>
                  <BandField $x={204} $y={3}>[Етикетки</BandField>
                  <Lay width="303" height="190">
                    <path d="M75.5 38v152M113.5 38v152M151.5 38v152M189.5 38v152M226.5 38v152M264.5 38v152M0 76.5h301M0 152.5h301" stroke="#e8e8e8" />
                    <path d="M302.5 0v190" stroke="#555" />
                    <path d="M53.5 38v152" stroke="#000" />
                    <path d="M.5 45v-6.5h7M23 38.5h7M44 38.5h9M263 38.5h9v6M274.5 45v-6.5h7M290 38.5h7v6" stroke="#000" fill="none" />
                    <path d="M56 95h7v7h-7zM56 113h7v7h-7zM151 94h7v7h-7zM245 94h7v7h-7z" fill="#000" />
                    <path d="M61.5 104v-5.5h6M54 144.5h7M60.5 166v-6.5h7M54 168.5h6M56 137.5h11M59.5 132v9" stroke="#000" fill="none" />
                    <path d="M57 137l5-4v7z" fill="#000" />
                    {bars.map(([x, w]) => <rect key={x} x={x} y="159" width={w} height="28" />)}
                    <path d="M193 8v7c0 3 11 3 11 0V8z" fill="#f2bf3a" stroke="#c89418" />
                    <ellipse cx="198.5" cy="8" rx="5.5" ry="2.5" fill="#fbe9a8" />
                  </Lay>
                  <Serif $x={56} $y={38}>[Етикетки."Товар"]</Serif>
                  <DropMark aria-label="Поле"><svg width="8" height="5"><path d="M0 0h8L4 4z" /></svg></DropMark>
                  <PriceText $x={0} $y={111}>ціна</PriceText>
                  <UnitText $x={277} $y={70}>[Місець]</UnitText>
                  <HeavyClip $x={7} $y={38}><Heavy>[,&lt;Етикетки</Heavy></HeavyClip>
                  <SmallHeavy $x={103} $y={141}>[Н</SmallHeavy>
                  <Placed $x={59} $y={100}><Icon name="picture" /></Placed>
                </Paper>
              </Canvas>
            </Designer>
            <RightDock>
              <Dock />
              <Tabs $h={22} role="tablist">
                <Tab role="tab" $on>Поля БД</Tab><Tab role="tab">Змінні</Tab><Tab role="tab">Функції</Tab><Tab role="tab">Класи</Tab>
              </Tabs>
              <FieldBox>
                <FieldTree>
                  <Node>
                    <Toggle aria-label="Етикетки"><Chevron /></Toggle>
                    <Icon name="dataset" />
                    <Caption $bold>Етикетки</Caption>
                  </Node>
                  {fields.map((f) => <TreeNode key={f} node={{ depth: 2, icon: "field", text: f }} />)}
                </FieldTree>
                <ScrollColumn><Chevron turn={180} /><Thumb $grow={4} $rest={5} /><Chevron /></ScrollColumn>
              </FieldBox>
              <HScroll><Chevron turn={-90} /></HScroll>
              <Options>
                {["Вставляти поле", "Вставляти заголовок", "Сортировать по имени"].map((t) => (
                  <CheckLabel key={t} $tall><Box />{t}</CheckLabel>
                ))}
              </Options>
            </RightDock>
          </Panels>
        </Content>
      </Body>
      <StatusBar>
        <Cell $w={74}>Сантиметри</Cell>
        <SplitCell $w={113}><Icon name="position" />0,80; 0,80</SplitCell>
        <Cell $w={117}><Icon name="size" />2,50; 0,50</Cell>
        <TextCell>Picture1: Етикетки."Піктограма виду товару"</TextCell>
        <svg width="10" height="12"><path d="M8 2v10M5 5v7M2 8v4" stroke="#b5b5b5" strokeWidth="2" strokeDasharray="2 1" /></svg>
      </StatusBar>
      <Dialog role="dialog" aria-label="Картинка">
        <DialogTitle>
          Картинка
          <CloseButton aria-label="Закрити"><svg width="11" height="11"><path d="M.5.5l10 10M10.5.5l-10 10" stroke="#fff" strokeWidth="1.2" /></svg></CloseButton>
        </DialogTitle>
        <DialogTools>
          <Tools names={["open", "copy", "paste", "eraser"]} />
          <DialogGap />
          <Tools names={["cross", "tick"]} />
        </DialogTools>
        <DialogView />
        <DialogStatus>Порожньо</DialogStatus>
      </Dialog>
      <Marks width="720" height="600">
        <ellipse cx="72.5" cy="62.5" rx="15.5" ry="14" />
        <ellipse cx="15" cy="278" rx="15" ry="12" />
        <ellipse cx="600" cy="300" rx="16" ry="13.5" />
        <rect x="33" y="477" width="256" height="14" rx="7" />
        <rect x="33" y="494" width="256" height="14" rx="7" />
        {arrows.map(({ from, to, turn }) => (
          <g key={turn}>
            <path d={`M${from[0]} ${from[1]}L${to[0]} ${to[1]}`} />
            <path d="M0 0L-10 -5V5z" fill="#ff0000" stroke="none" transform={`translate(${to[0]} ${to[1]}) rotate(${turn})`} />
          </g>
        ))}
        <MarkText x="34" y="301">1</MarkText>
        <MarkText x="663" y="447">2</MarkText>
        <MarkText x="402" y="559">3</MarkText>
        <MarkText x="209" y="186">4</MarkText>
      </Marks>
    </Window>
  );
}
